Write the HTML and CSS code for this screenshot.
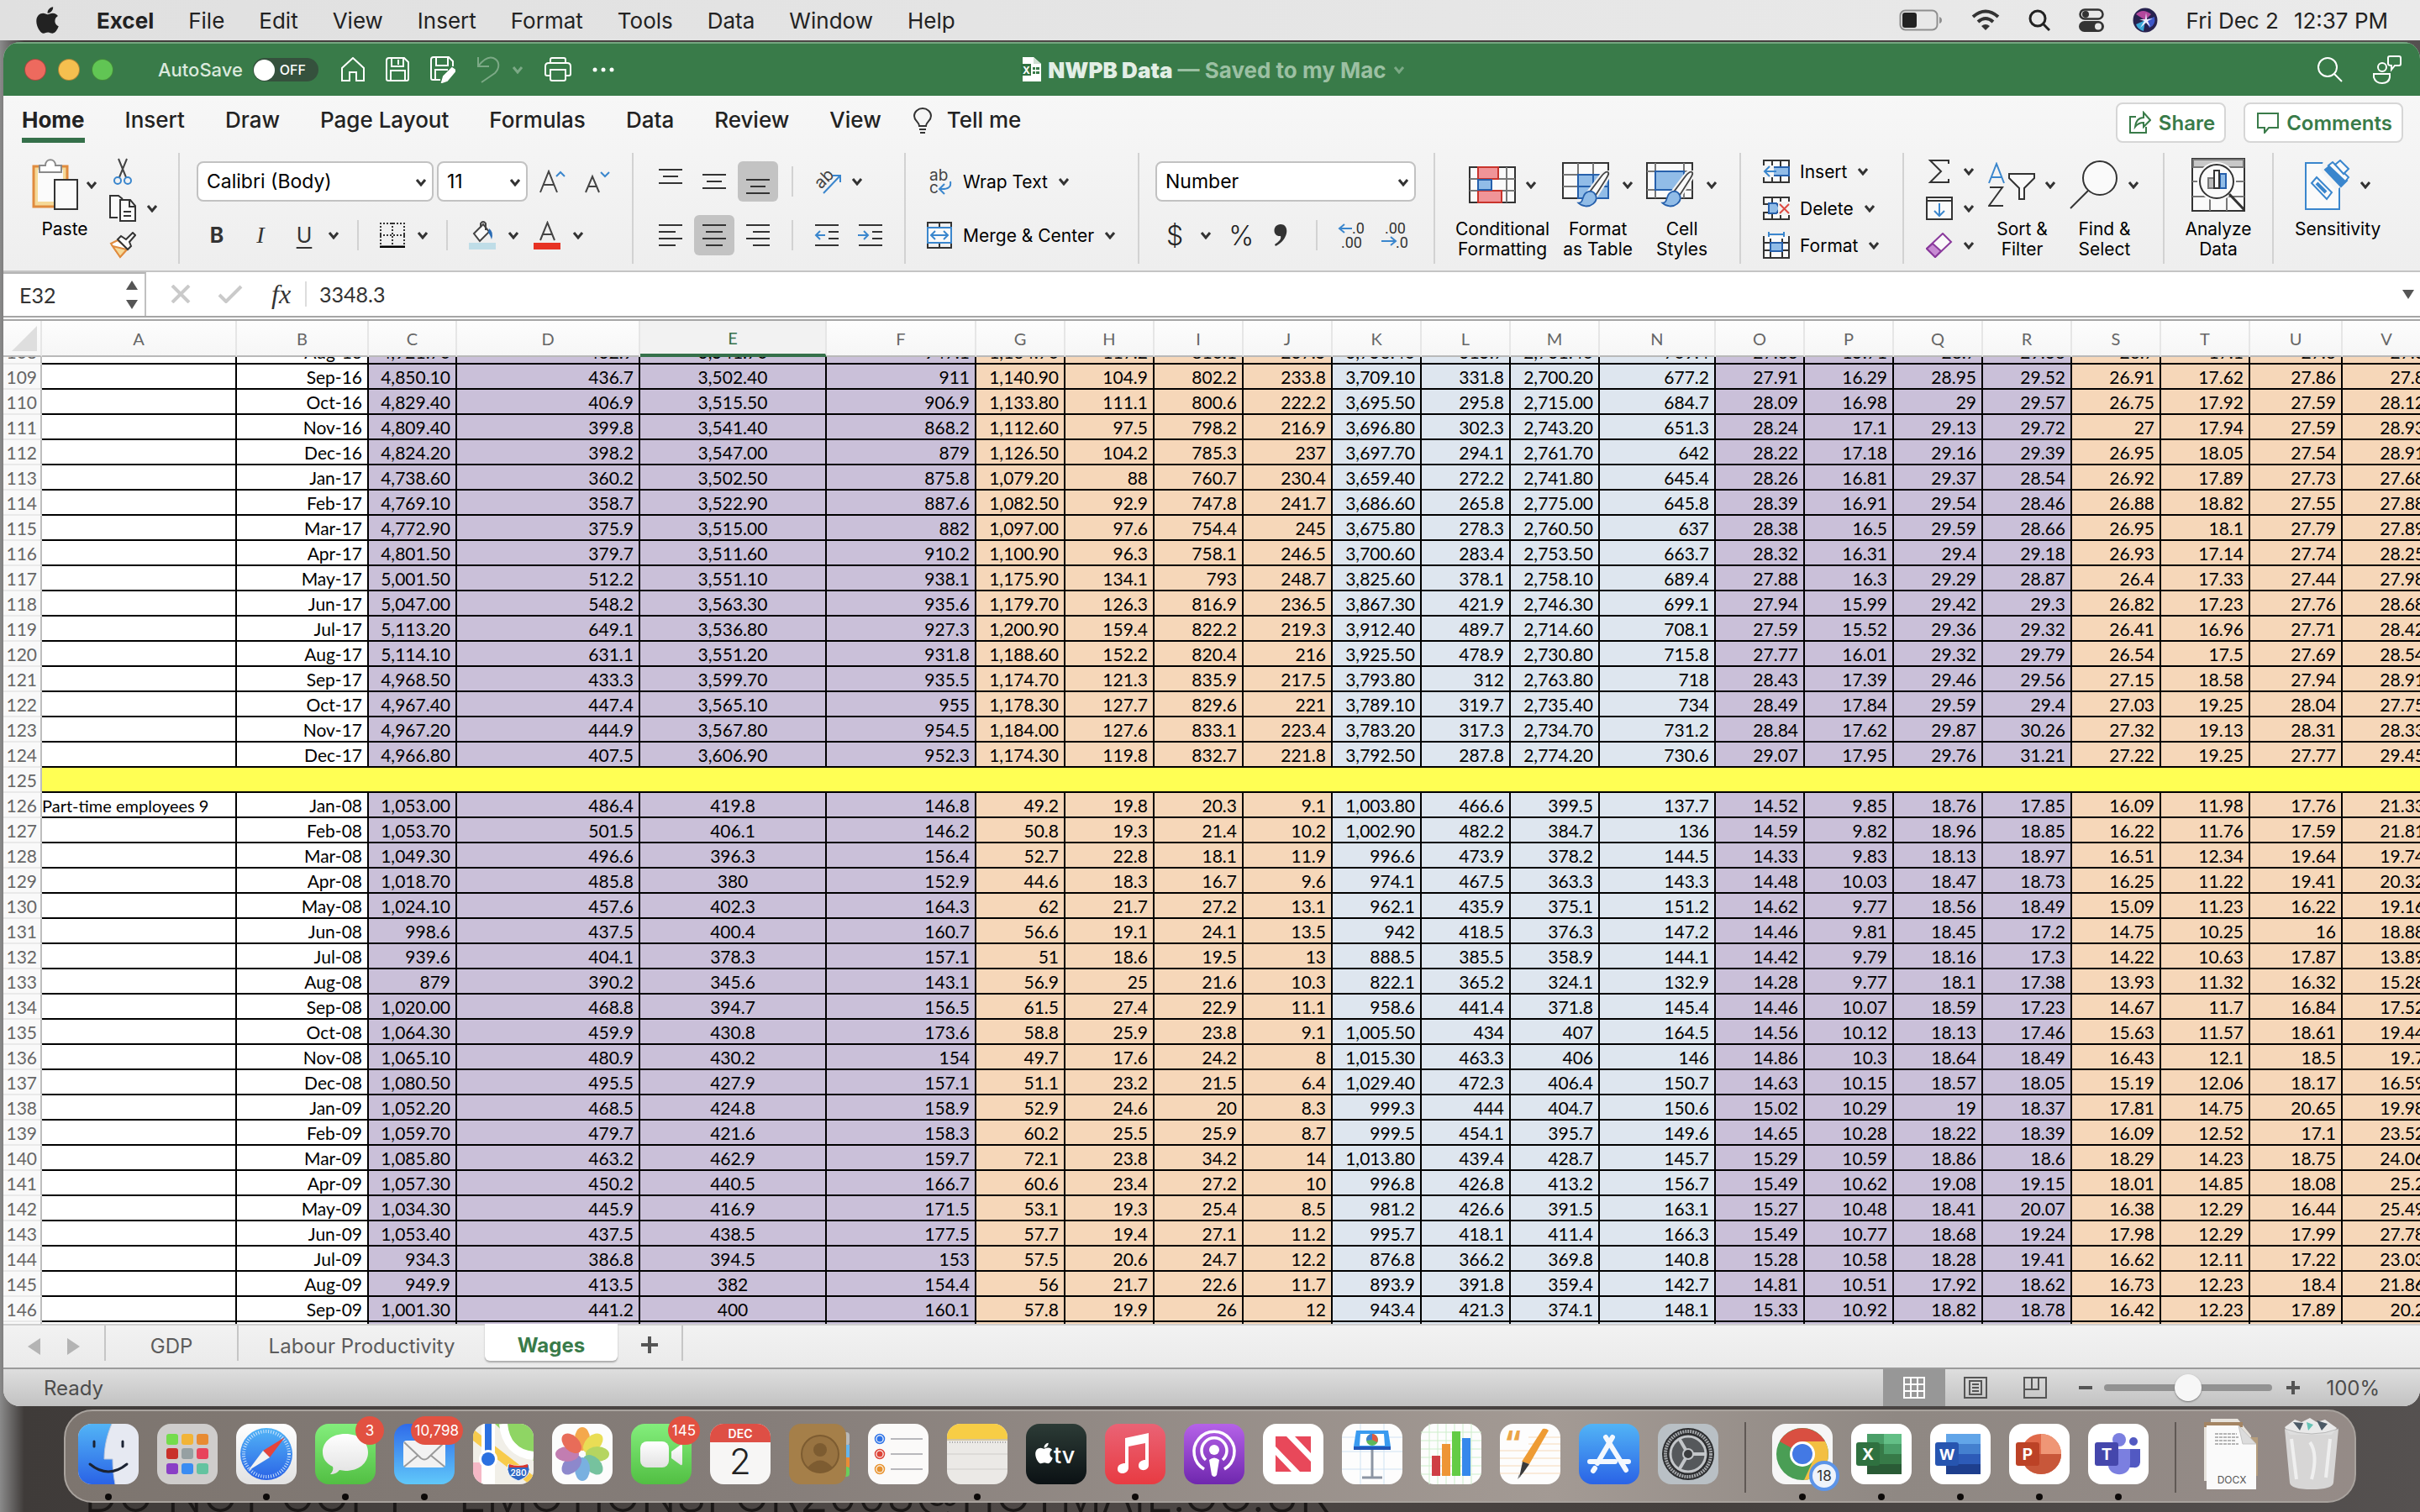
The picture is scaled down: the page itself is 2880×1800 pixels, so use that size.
FILE: index.html
```html
<!DOCTYPE html>
<html lang="en">
<head>
    <meta charset="UTF-8">
    <title>NWPB Data</title>
    <link rel="stylesheet" href="styles.css">
</head>
<body>
    <!-- shared symbols -->
    <svg class="defs" aria-hidden="true">
        <symbol id="chev" viewBox="0 0 14 10"><path d="M2 2l5 6 5-6" fill="none" stroke="currentColor" stroke-width="3"/></symbol>
        <symbol id="apple" viewBox="0 0 384 512"><path fill="currentColor" d="M318.7 268.7c-.2-36.7 16.4-64.4 50-84.8-18.8-26.9-47.2-41.7-84.7-44.6-35.5-2.8-74.3 20.7-88.5 20.7-15 0-49.4-19.7-76.4-19.7C63.3 141.2 4 184.8 4 273.5q0 39.3 14.4 81.2c12.8 36.7 59 126.7 107.2 125.2 25.2-.6 43-17.9 75.8-17.9 31.8 0 48.3 17.9 76.4 17.9 48.6-.7 90.4-82.5 102.6-119.3-65.2-30.7-61.7-90-61.7-91.9zm-56.6-164.2c27.3-32.4 24.8-61.9 24-72.5-24.1 1.4-52 16.4-67.9 34.9-17.5 19.8-27.8 44.3-25.6 71.9 26.1 2 49.9-11.4 69.5-34.3z"/></symbol>
        <symbol id="brush" viewBox="0 0 44 50">
            <path d="M42 2c-3-1-6 2-9 6L18 28l7 6L39 12c3-5 5-8 3-10z" fill="#fafafa" stroke="#f2f2f2" stroke-width="7"/>
            <path d="M42 2c-3-1-6 2-9 6L18 28l7 6L39 12c3-5 5-8 3-10z" fill="#fafafa" stroke="#444" stroke-width="2"/>
            <path d="M2 44c5 0 5-4 7-9 2-6 9-9 14-5 5 5 4 11-1 15-6 5-15 4-20-1z" fill="#91bce7" stroke="#2660ac" stroke-width="2"/>
        </symbol>
        <linearGradient id="blueV" x1="0" y1="0" x2="0" y2="1"><stop offset="0" stop-color="#52b4f6"/><stop offset="1" stop-color="#2a63e6"/></linearGradient>
        <linearGradient id="mailV" x1="0" y1="0" x2="0" y2="1"><stop offset="0" stop-color="#2f6bea"/><stop offset="1" stop-color="#60c8fa"/></linearGradient>
        <linearGradient id="greenV" x1="0" y1="0" x2="0" y2="1"><stop offset="0" stop-color="#83ee7c"/><stop offset="1" stop-color="#52bf43"/></linearGradient>
        <linearGradient id="redV" x1="0" y1="0" x2="0" y2="1"><stop offset="0" stop-color="#ea6375"/><stop offset="1" stop-color="#e83b42"/></linearGradient>
        <linearGradient id="purpleV" x1="0" y1="0" x2="0" y2="1"><stop offset="0" stop-color="#b562e8"/><stop offset="1" stop-color="#6f27ae"/></linearGradient>
        <linearGradient id="whiteV" x1="0" y1="0" x2="0" y2="1"><stop offset="0" stop-color="#fff"/><stop offset="1" stop-color="#e2e2e2"/></linearGradient>
        <linearGradient id="blackV" x1="0" y1="0" x2="0" y2="1"><stop offset="0" stop-color="#2c3b36"/><stop offset="1" stop-color="#0b1114"/></linearGradient>
        <clipPath id="tile"><rect width="72" height="72" rx="16"/></clipPath>
    </svg>

    <header class="menubar">
        <svg class="apple-logo"><use href="#apple"/></svg>
        <nav class="menus">
            <a href="#" class="app-name">Excel</a>
            <a href="#">File</a>
            <a href="#">Edit</a>
            <a href="#">View</a>
            <a href="#">Insert</a>
            <a href="#">Format</a>
            <a href="#">Tools</a>
            <a href="#">Data</a>
            <a href="#">Window</a>
            <a href="#">Help</a>
        </nav>
        <div class="menu-extras">
            <svg width="52" height="26" viewBox="0 0 52 26"><rect x="1.500" y="1.500" width="44" height="23" rx="6" fill="none" stroke="#8f8f8f" stroke-width="2"/><rect x="4" y="4" width="17" height="18" rx="3" fill="#222"/><path d="M48 9q3 1 3 4t-3 4z" fill="#8f8f8f"/></svg>
            <svg width="34" height="26" viewBox="0 0 34 26" fill="none" stroke="#333" stroke-width="4"><path d="M2 9Q17-4 32 9M8 15q9-8 18 0"/><path d="M17 25l-5-5q5-4 10 0z" fill="#333" stroke="none"/></svg>
            <svg width="26" height="26" viewBox="0 0 26 26" fill="none" stroke="#222" stroke-width="3"><circle cx="11" cy="11" r="9"/><path d="M17 17l8 8"/></svg>
            <svg width="30" height="28" viewBox="0 0 30 28"><rect x="1.500" y="1.500" width="27" height="11" rx="5.500" fill="none" stroke="#333" stroke-width="2.500"/><circle cx="8" cy="7" r="4" fill="#333"/><rect y="15" width="30" height="13" rx="6.500" fill="#333"/><circle cx="23" cy="21.500" r="4" fill="#e8e8e8"/></svg>
            <svg width="30" height="30" viewBox="0 0 30 30"><circle cx="15" cy="15" r="14.500" fill="#27224f"/><path d="M4 8q8-8 18 0l-7 7z" fill="#b3479d"/><path d="M15 15l11-4q2 10-6 13z" fill="#3d56c8"/><path d="M15 15L4 20q2 6 9 8z" fill="#3aa8d8"/><path d="M16 6l1 8 7-1-6 3 3 7-5-5-7 6 5-8-6-2 7 0z" fill="#eef"/></svg>
            <span class="clock"><span>Fri Dec 2</span><span>12:37 PM</span></span>
        </div>
    </header>

    <main class="desktop">
        <p class="watermark" aria-hidden="true">DO NOT COPY - EMOTIONSFOR2003@HOTMAIL.CO.UK</p>
        <section class="window">
            <div class="titlebar">
                <div class="title-left">
                    <div class="lights">
                        <button class="light red" aria-label="Close"></button>
                        <button class="light yellow" aria-label="Minimize"></button>
                        <button class="light green" aria-label="Zoom"></button>
                    </div>
                    <label class="autosave">AutoSave
                        <span class="switch"><input type="checkbox"><span>OFF</span></span>
                    </label>
                    <div class="quick">
                        <button aria-label="Home"><svg width="28" height="30" viewBox="0 0 28 30" fill="none" stroke="#fff" stroke-width="2"><path d="M1 13L14 1l13 12v15h-9V18h-8v10H1z"/></svg></button>
                        <button aria-label="Save"><svg width="28" height="30" viewBox="0 0 28 30" fill="none" stroke="#fff" stroke-width="2"><path d="M4 1h18l5 5v20q0 2-2 2H3q-2 0-2-2V4q0-3 3-3zM7 1v10h14V1M6 28V16h17v12M15 3v6"/></svg></button>
                        <button aria-label="Save as"><svg width="30" height="32" viewBox="0 0 30 32" fill="none" stroke="#fff" stroke-width="2"><path d="M12 28H3q-2 0-2-2V4q0-3 3-3h18l5 5v6M7 1v10h14V1M6 28V16h15"/><path d="M26 14l4 3-10 12-6 2 2-7z" fill="#fff"/></svg></button>
                        <button class="undo" aria-label="Undo"><svg width="28" height="32" viewBox="0 0 28 32" fill="none" stroke="currentColor" stroke-width="2"><path d="M2 1v11h13M2 12C8 4 14 0 20 2c8 3 8 12 2 18L6 31"/></svg><svg class="chev"><use href="#chev"/></svg></button>
                        <button aria-label="Print"><svg width="32" height="30" viewBox="0 0 32 30" fill="none" stroke="#fff" stroke-width="2"><path d="M7 7V3q0-2 2-2h14q2 0 2 2v4M7 22H3q-2 0-2-2v-9q0-4 4-4h22q4 0 4 4v9q0 2-2 2h-4M7 15h18v11q0 2-2 2H9q-2 0-2-2z"/></svg></button>
                        <button aria-label="More"><svg width="26" height="8" viewBox="0 0 26 8" fill="#fff"><circle cx="3" cy="4" r="2.500"/><circle cx="13" cy="4" r="2.500"/><circle cx="23" cy="4" r="2.500"/></svg></button>
                    </div>
                </div>
                <div class="doc-title">
                    <svg width="24" height="30" viewBox="0 0 24 30"><path d="M2 0h13l9 8v21H2z" fill="#fff"/><path d="M15 0v8h9" fill="#cfe0d2"/><rect y="8" width="12" height="14" fill="#2f7241"/><text x="2" y="20" font-size="12" fill="#fff" font-family="Inter, sans-serif">X</text><path d="M14 12h3v3h-3zM18 12h4v3h-4zM14 17h3v3h-3zM18 17h4v3h-4z" fill="#397b49"/></svg>
                    <span><b>NWPB Data</b> — Saved to my Mac</span>
                    <svg class="chev"><use href="#chev"/></svg>
                </div>
                <div class="title-right">
                    <button aria-label="Search"><svg width="30" height="30" viewBox="0 0 30 30" fill="none" stroke="#fff" stroke-width="2"><circle cx="12" cy="12" r="11"/><path d="M20 20l9 9"/></svg></button>
                    <button aria-label="Presence"><svg width="34" height="34" viewBox="0 0 34 34" fill="none" stroke="#fff" stroke-width="2"><circle cx="11" cy="14" r="5"/><path d="M1 22h19v4q-1 7-9 7t-10-7zM20 1h11q2 0 2 2v7q0 2-2 2h-5l-4 5v-5q-4 0-4-2V3q0-2 2-2z"/></svg></button>
                </div>
            </div>

            <div class="ribbon">
                <div class="tabs">
                    <nav class="tab-list">
                        <a href="#" class="active">Home</a>
                        <a href="#">Insert</a>
                        <a href="#">Draw</a>
                        <a href="#">Page Layout</a>
                        <a href="#">Formulas</a>
                        <a href="#">Data</a>
                        <a href="#">Review</a>
                        <a href="#">View</a>
                        <a href="#" class="tellme"><svg width="22" height="32" viewBox="0 0 22 32" fill="none" stroke="#333" stroke-width="2"><path d="M7 22c0-5-6-6-6-12a10 9 0 0 1 20 0c0 6-6 7-6 12zM7 26h8M8 30h6"/></svg>Tell me</a>
                    </nav>
                    <button class="pill"><svg width="26" height="28" viewBox="0 0 26 28" fill="none" stroke="#397b49" stroke-width="2"><path d="M8 7H1v19h19v-7"/><path d="M7 19C8 11 12 8 17 8V2l8 9-8 8v-5c-4 0-7 1-10 5z"/></svg>Share</button>
                    <button class="pill"><svg width="26" height="26" viewBox="0 0 26 26" fill="none" stroke="#397b49" stroke-width="2"><path d="M1 2h24v17H14l-5 6v-6H1z"/></svg>Comments</button>
                </div>

                <div class="groups">
                    <div class="group clipboard">
                        <button class="big">
                            <span class="big-icon"><svg width="56" height="62" viewBox="0 0 56 62"><path d="M2 9h40v48H2z" fill="#f5d998" stroke="#e08b3e" stroke-width="3"/><path d="M7 13h30v38H7z" fill="#fbfbfb"/><path d="M9 16V8h7c0-9 12-9 12 0h7v8z" fill="#fff" stroke="#8a8a8a" stroke-width="2"/><path d="M27 25h27v35H27z" fill="#fafafa" stroke="#333" stroke-width="2"/></svg><svg class="chev"><use href="#chev"/></svg></span>
                            <span>Paste</span>
                        </button>
                        <div class="stack">
                            <button class="tool" aria-label="Cut"><svg width="32" height="32" viewBox="0 0 32 32" fill="none" stroke="#444" stroke-width="2"><path d="M11 1l9 22M21 1l-9 22"/><g stroke="#3a86cd"><circle cx="10" cy="27" r="4"/><circle cx="22" cy="27" r="4"/></g></svg></button>
                            <button class="tool" aria-label="Copy"><svg width="32" height="32" viewBox="0 0 32 32" fill="#fafafa" stroke="#333" stroke-width="2"><path d="M10 27H1V1h10l5 4"/><path d="M13 6h12l6 7v18H13z"/><path d="M24 6v8h7M17 20h9M17 25h9" fill="none"/></svg><svg class="chev"><use href="#chev"/></svg></button>
                            <button class="tool" aria-label="Format painter"><svg width="32" height="32" viewBox="0 0 32 32"><path d="M2 14l8-4 12 10-9 10z" fill="#fff" stroke="#e08b3e" stroke-width="2"/><path d="M4 17l17 4-8 9z" fill="#f5d998" stroke="#e08b3e" stroke-width="2"/><path d="M10 9l4-4 6 4 8-8 3 3-7 8 2 5-4 4z" fill="#fafafa" stroke="#333" stroke-width="2"/></svg></button>
                        </div>
                    </div>

                    <div class="group font-group">
                        <div class="row">
                            <span class="select wide"><select aria-label="Font"><option>Calibri (Body)</option></select><svg class="chev"><use href="#chev"/></svg></span>
                            <span class="select narrow"><select aria-label="Font size"><option>11</option></select><svg class="chev"><use href="#chev"/></svg></span>
                            <button class="grow" aria-label="Increase font size"><svg width="32" height="28" viewBox="0 0 32 28" fill="none" stroke="#444" stroke-width="2"><path d="M1 27L11 2l10 25M5 18h12"/><path d="M20 8l5-5 5 5" stroke="#3a86cd"/></svg></button>
                            <button class="grow" aria-label="Decrease font size"><svg width="32" height="28" viewBox="0 0 32 28" fill="none" stroke="#444" stroke-width="2"><path d="M1 27L9 8l8 19M4 20h10"/><path d="M19 3l5 5 5-5" stroke="#3a86cd"/></svg></button>
                        </div>
                        <div class="row">
                            <button class="sq bold">B</button>
                            <button class="sq italic">I</button>
                            <button class="sq under">U</button>
                            <svg class="chev"><use href="#chev"/></svg>
                            <i class="sep"></i>
                            <button class="tool" aria-label="Borders"><svg width="30" height="30" viewBox="0 0 30 30" fill="none" stroke="#333" stroke-width="2"><path d="M0 1h30M1 0v27M29 0v27M15 0v27M0 15h30" stroke-dasharray="2 2"/><path d="M0 29h30" stroke="#000" stroke-width="3"/></svg><svg class="chev"><use href="#chev"/></svg></button>
                            <i class="sep"></i>
                            <button class="tool" aria-label="Fill color"><svg width="32" height="34" viewBox="0 0 32 34"><path d="M6 15L17 4l7 9-11 11z" fill="#fafafa" stroke="#444" stroke-width="2"/><path d="M14 8V3q3-4 6 0v8" fill="none" stroke="#444" stroke-width="2"/><path d="M24 9q6 4 3 13-2-6-4-8z" fill="#2a6cb5"/><path d="M0 26h32v8H0z" fill="#bfdde7"/></svg><svg class="chev"><use href="#chev"/></svg></button>
                            <button class="tool" aria-label="Font color"><svg width="32" height="34" viewBox="0 0 32 34"><path d="M8 23L16.500 2 25 23M11 16h11" fill="none" stroke="#444" stroke-width="2"/><path d="M0 26h32v8H0z" fill="#e73223"/></svg><svg class="chev"><use href="#chev"/></svg></button>
                        </div>
                    </div>

                    <div class="group align-group">
                        <div class="row">
                            <button class="sq" aria-label="Top align"><svg width="28" height="30" viewBox="0 0 28 30" stroke="#333" stroke-width="2"><path d="M0 1h28M5 9h18M0 17h28"/></svg></button>
                            <button class="sq" aria-label="Middle align"><svg width="28" height="30" viewBox="0 0 28 30" stroke="#333" stroke-width="2"><path d="M0 7h28M5 15h18M0 23h28"/></svg></button>
                            <button class="sq on" aria-label="Bottom align"><svg width="28" height="30" viewBox="0 0 28 30" stroke="#333" stroke-width="2"><path d="M0 13h28M5 21h18M0 29h28"/></svg></button>
                            <i class="sep"></i>
                            <button class="tool" aria-label="Orientation"><svg width="32" height="32" viewBox="0 0 32 32"><text x="4" y="24" font-size="20" fill="#444" font-family="Inter, sans-serif" transform="rotate(-45 8 20)">ab</text><path d="M11 30L31 9M22 9h9v8" fill="none" stroke="#3a86cd" stroke-width="2"/></svg><svg class="chev"><use href="#chev"/></svg></button>
                        </div>
                        <div class="row">
                            <button class="sq" aria-label="Align left"><svg width="28" height="26" viewBox="0 0 28 26" stroke="#333" stroke-width="2"><path d="M0 1h28M0 9h20M0 17h28M0 25h20"/></svg></button>
                            <button class="sq on" aria-label="Center"><svg width="28" height="26" viewBox="0 0 28 26" stroke="#333" stroke-width="2"><path d="M0 1h28M4 9h20M0 17h28M4 25h20"/></svg></button>
                            <button class="sq" aria-label="Align right"><svg width="28" height="26" viewBox="0 0 28 26" stroke="#333" stroke-width="2"><path d="M0 1h28M8 9h20M0 17h28M8 25h20"/></svg></button>
                            <i class="sep"></i>
                            <button class="tool" aria-label="Decrease indent"><svg width="30" height="26" viewBox="0 0 30 26" fill="none" stroke="#333" stroke-width="2"><path d="M1 1h28M17 9h12M17 17h12M1 25h28"/><path d="M13 13H2M7 8l-5 5 5 5" stroke="#3a86cd"/></svg></button>
                            <button class="tool indent" aria-label="Increase indent"><svg width="30" height="26" viewBox="0 0 30 26" fill="none" stroke="#333" stroke-width="2"><path d="M1 1h28M17 9h12M17 17h12M1 25h28"/><path d="M0 13h12M7 8l5 5-5 5" stroke="#3a86cd"/></svg></button>
                        </div>
                    </div>

                    <div class="group wrap-group">
                        <div class="row">
                            <button class="tool"><svg width="32" height="32" viewBox="0 0 32 32"><text x="4" y="15" font-size="19" fill="#444" font-family="Inter, sans-serif">ab</text><text x="4" y="30" font-size="19" fill="#444" font-family="Inter, sans-serif">c</text><path d="M29 16q2 10-12 9M22 19l-6 6 6 6" fill="none" stroke="#3a86cd" stroke-width="2"/></svg>Wrap Text<svg class="chev"><use href="#chev"/></svg></button>
                        </div>
                        <div class="row">
                            <button class="tool"><svg width="32" height="32" viewBox="0 0 32 32" fill="none" stroke="#333" stroke-width="2"><path d="M2 1h28v30H2zM16 1v6M16 25v6"/><path d="M2 7h28v18H2z" fill="#fafafa" stroke="#3a86cd"/><path d="M6 16h20M11 11l-5 5 5 5M21 11l5 5-5 5" stroke="#3a86cd"/></svg>Merge &amp; Center<svg class="chev"><use href="#chev"/></svg></button>
                        </div>
                    </div>

                    <div class="group number-group">
                        <div class="row">
                            <span class="select format"><select aria-label="Number format"><option>Number</option></select><svg class="chev"><use href="#chev"/></svg></span>
                        </div>
                        <div class="row numbers">
                            <button class="glyph">$</button>
                            <svg class="chev"><use href="#chev"/></svg>
                            <button class="glyph">%</button>
                            <button class="glyph" aria-label="Comma style"><svg width="24" height="26" viewBox="-4 0 24 26"><path d="M8 0c11 0 10 18-6 26l-1-2c6-4 8-7 7-10C-2 15-2 0 8 0z" fill="#333"/></svg></button>
                            <i class="sep"></i>
                            <button class="tool" aria-label="Increase decimal"><svg width="32" height="32" viewBox="0 0 32 32"><g font-size="18" fill="#333" font-family="Roboto, sans-serif"><text x="17" y="14">.0</text><text x="4" y="31">.00</text></g><path d="M17 8H2M8 3L2 8l6 5" fill="none" stroke="#3a86cd" stroke-width="2"/></svg></button>
                            <button class="tool" aria-label="Decrease decimal"><svg width="32" height="32" viewBox="0 0 32 32"><g font-size="18" fill="#333" font-family="Roboto, sans-serif"><text x="4" y="14">.00</text><text x="17" y="31">.0</text></g><path d="M0 23h16M11 18l6 5-6 5" fill="none" stroke="#3a86cd" stroke-width="2"/></svg></button>
                        </div>
                    </div>

                    <div class="group style-group">
                        <button class="big">
                            <span class="big-icon"><svg width="56" height="44" viewBox="0 0 56 44" fill="#fafafa" stroke="#333" stroke-width="2"><path d="M1 1h54v42H1z"/><path d="M1 15h54M1 29h54M11 1v42M45 1v42" stroke="#777"/><path d="M11 1h24v14H11zM11 29h28v14H11z" fill="#f09498" stroke="#c9342c"/><path d="M11 16h16v12H11z" fill="#91bce7" stroke="#2660ac"/></svg><svg class="chev"><use href="#chev"/></svg></span>
                            <span>Conditional<br>Formatting</span>
                        </button>
                        <button class="big">
                            <span class="big-icon"><svg width="60" height="54" viewBox="0 0 60 54" fill="#fafafa" stroke="#333" stroke-width="2"><path d="M1 1h54v42H1z"/><path d="M1 15h54M1 29h54M19 1v42M37 1v42" stroke="#777"/><path d="M19 15h36v28H19zM19 29h36M37 15v28" fill="#91bce7" stroke="#2660ac"/><use href="#brush" x="15" y="10" width="44" height="44"/></svg><svg class="chev"><use href="#chev"/></svg></span>
                            <span>Format<br>as Table</span>
                        </button>
                        <button class="big">
                            <span class="big-icon"><svg width="60" height="54" viewBox="0 0 60 54" fill="#fafafa" stroke="#333" stroke-width="2"><path d="M1 1h54v42H1z"/><path d="M1 11h54M1 33h54M11 1v42M45 1v42" stroke="#777"/><path d="M11 11h34v22H11z" fill="#91bce7" stroke="#2660ac"/><use href="#brush" x="15" y="10" width="44" height="44"/></svg><svg class="chev"><use href="#chev"/></svg></span>
                            <span>Cell<br>Styles</span>
                        </button>
                    </div>

                    <div class="group cells-group">
                        <div class="stack">
                            <button class="tool"><svg width="32" height="28" viewBox="0 0 32 28" fill="#fafafa" stroke="#333" stroke-width="2"><path d="M1 1h30v26H1zM11 1v26M21 1v26"/><path d="M11 9h20v10H11z" fill="#91bce7" stroke="#2660ac"/><path d="M0 7h13v14H0z" fill="#f2f2f2" stroke="none"/><path d="M16 14H2M8 8l-6 6 6 6" fill="none" stroke="#3a86cd"/></svg>Insert<svg class="chev"><use href="#chev"/></svg></button>
                            <button class="tool"><svg width="32" height="28" viewBox="0 0 32 28" fill="#fafafa" stroke="#333" stroke-width="2"><path d="M1 9V1h30v8zM1 27v-8h30v8zM11 1v8M21 1v8M11 19v8M21 19v8"/><path d="M7 8h9l4 6-4 6H7z" fill="#91bce7" stroke="#2660ac"/><path d="M18 6h14v16H18z" fill="#f2f2f2" stroke="none"/><path d="M20 9l11 11M31 9L20 20" fill="none" stroke="#dd4a42"/></svg>Delete<svg class="chev"><use href="#chev"/></svg></button>
                            <button class="tool"><svg width="32" height="32" viewBox="0 0 32 32" fill="#fafafa" stroke="#333" stroke-width="2"><path d="M1 5v26h30V5M1 13h30M1 22h30M9 8v23M23 8v23"/><path d="M9 13h14v10H9z" fill="#91bce7" stroke="#2660ac"/><path d="M7 3h18M7 0v6M25 0v6" stroke="#3a86cd"/></svg>Format<svg class="chev"><use href="#chev"/></svg></button>
                        </div>
                    </div>

                    <div class="group edit-group">
                        <div class="stack">
                            <button class="tool" aria-label="AutoSum"><svg width="32" height="28" viewBox="0 0 32 28" fill="none" stroke="#333" stroke-width="2"><path d="M27 5V1H5l13 13L5 27h22v-4"/></svg><svg class="chev"><use href="#chev"/></svg></button>
                            <button class="tool" aria-label="Fill"><svg width="32" height="28" viewBox="0 0 32 28" fill="#fafafa" stroke="#333" stroke-width="2"><path d="M1 1h30v26H1zM1 5h30"/><path d="M16 8v14M10 17l6 6 6-6" fill="none" stroke="#3a86cd"/></svg><svg class="chev"><use href="#chev"/></svg></button>
                            <button class="tool" aria-label="Clear"><svg width="32" height="30" viewBox="0 0 32 30" fill="#fafafa" stroke="#8a3a9c" stroke-width="2"><path d="M20 1l10 10-19 18L1 19z"/><path d="M8 13l10 9-7 7L1 19z" fill="#c78bd3"/></svg><svg class="chev"><use href="#chev"/></svg></button>
                        </div>
                        <button class="big">
                            <span class="big-icon"><svg width="56" height="54" viewBox="0 0 56 54" fill="none" stroke="#333" stroke-width="2"><path d="M1 25L10 2l9 23M4 18h12" stroke="#3a86cd"/><path d="M2 30h15L1 52h17"/><path d="M25 14h30v5L43 31v13h-6V31L25 19z" fill="#fafafa"/></svg><svg class="chev"><use href="#chev"/></svg></span>
                            <span>Sort &amp;<br>Filter</span>
                        </button>
                        <button class="big">
                            <span class="big-icon"><svg width="58" height="58" viewBox="0 0 58 58" fill="#fafafa" stroke="#333" stroke-width="2"><circle cx="36" cy="21" r="20"/><path d="M22 36L1 57"/></svg><svg class="chev"><use href="#chev"/></svg></span>
                            <span>Find &amp;<br>Select</span>
                        </button>
                    </div>

                    <div class="group analyze-group">
                        <button class="big">
                            <span class="big-icon"><svg width="64" height="64" viewBox="0 0 64 64" fill="#fafafa" stroke="#333" stroke-width="2"><path d="M1 1h62v62H1z"/><path d="M2 2h60v9H2z" fill="#c8c8c8" stroke="#777"/><path d="M1 28h62M1 46h62M22 46v17M42 46v17" stroke="#777"/><circle cx="30" cy="28" r="20" stroke="#fafafa" stroke-width="6"/><circle cx="30" cy="28" r="20"/><path d="M45 43l18 19" stroke-width="3"/><path d="M20 24h7v12h-7z" fill="#bbb" stroke="#777"/><path d="M34 19h7v17h-7z" fill="#91bce7" stroke="#2660ac"/><path d="M27 15h6v21h-6z"/></svg></span>
                            <span>Analyze<br>Data</span>
                        </button>
                    </div>

                    <div class="group sens-group">
                        <button class="big">
                            <span class="big-icon"><svg width="54" height="60" viewBox="0 0 54 60" fill="#fafafa" stroke="#3a86cd" stroke-width="2"><path d="M1 4h40v55H1z"/><path d="M22 1l-3 12 18 24 7-6V1z" fill="#f4f4f4" stroke="none"/><path d="M14 21l18 18-6 8L8 28z"/><path d="M14 28l11 11" stroke-width="4"/><path d="M24 12l6-5 20 18-7 7z" fill="#3a86cd"/><path d="M28 7l5-4 19 18-4 5z"/><path d="M36 6l6-5 10 10-6 6z"/></svg><svg class="chev"><use href="#chev"/></svg></span>
                            <span>Sensitivity</span>
                        </button>
                    </div>
                </div>
            </div>

            <div class="formula-bar">
                <div class="name-box">
                    <input type="text" aria-label="Name box" value="E32">
                    <svg width="14" height="34" viewBox="0 0 14 34" fill="#555"><path d="M7 0l7 11H0zM7 34l7-11H0z"/></svg>
                </div>
                <button aria-label="Cancel"><svg width="24" height="22" viewBox="0 0 24 22" stroke="#cacaca" stroke-width="4"><path d="M2 1l20 20M22 1L2 21"/></svg></button>
                <button class="enter" aria-label="Enter"><svg width="30" height="22" viewBox="0 0 30 22" fill="none" stroke="#cacaca" stroke-width="4"><path d="M2 12l8 8L28 2"/></svg></button>
                <button class="fx">fx</button>
                <input class="formula" type="text" aria-label="Formula" value="3348.3">
                <svg class="expand" width="14" height="11" viewBox="0 0 14 11"><path d="M0 0h14L7 11z" fill="#555"/></svg>
            </div>

            <div class="sheet" id="sheet">
                <table>
                    <colgroup id="cols"></colgroup>
                    <thead><tr id="letters"></tr></thead>
                    <tbody id="rows"></tbody>
                </table>
            </div>

            <div class="sheet-tabs">
                <div class="scrollers">
                    <button aria-label="Previous sheet"><svg width="15" height="20" viewBox="0 0 15 20"><path d="M15 0v20L0 10z" fill="#b4b4b4"/></svg></button>
                    <button aria-label="Next sheet"><svg width="15" height="20" viewBox="0 0 15 20"><path d="M0 0v20l15-10z" fill="#b4b4b4"/></svg></button>
                </div>
                <a href="#" class="short">GDP</a>
                <a href="#" class="long">Labour Productivity</a>
                <a href="#" class="short current">Wages</a>
                <button class="add" aria-label="Add sheet"><svg width="20" height="20" viewBox="0 0 20 20"><path d="M10 0v20M0 10h20" stroke="#555" stroke-width="4"/></svg></button>
            </div>

            <div class="statusbar">
                <span class="ready">Ready</span>
                <button class="view on" aria-label="Normal view"><svg width="26" height="26" viewBox="0 0 26 26" fill="none" stroke="#fff" stroke-width="2"><path d="M1 1h24v24H1zM1 9h24M1 17h24M9 1v24M17 1v24"/></svg></button>
                <button class="view" aria-label="Page layout"><svg width="28" height="26" viewBox="0 0 28 26" fill="none" stroke="#555" stroke-width="2"><path d="M1 1h26v24H1zM7 5h14v16H7zM10 9h8M10 13h8M10 17h8"/></svg></button>
                <button class="view" aria-label="Page break preview"><svg width="28" height="26" viewBox="0 0 28 26" fill="none" stroke="#555" stroke-width="2"><path d="M1 1h26v24H1zM1 15h17V1M10 1v14"/></svg></button>
                <button class="zoom-btn" aria-label="Zoom out"><svg width="16" height="16" viewBox="0 0 16 16"><path d="M0 8h16" stroke="#555" stroke-width="4"/></svg></button>
                <input type="range" min="0" max="100" value="50" aria-label="Zoom">
                <button class="zoom-btn" aria-label="Zoom in"><svg width="16" height="16" viewBox="0 0 16 16"><path d="M0 8h16M8 0v16" stroke="#555" stroke-width="4"/></svg></button>
                <span class="percent">100%</span>
            </div>
        </section>

        <nav class="dock">
            <button class="app running" aria-label="Finder"><svg viewBox="0 0 72 72"><g clip-path="url(#tile)"><path d="M0 0h72v72H0z" fill="#e6e9f2"/><path d="M0 0h40c-6 14-9 28-9 42h10c0 10 1 20 3 30H0z" fill="url(#blueV)"/></g><path d="M40 0c-6 14-9 28-9 42h10c0 10 1 20 3 30" fill="none" stroke="#b9c6dc" stroke-width="1"/><path d="M19 21v6M53 21v6M14 48q22 18 44 0" fill="none" stroke="#1b2333" stroke-width="3" stroke-linecap="round"/></svg></button>
            <button class="app" aria-label="Launchpad"><svg viewBox="0 0 72 72"><rect width="72" height="72" rx="16" fill="#cfcdcc"/><g><rect x="11" y="12" width="14" height="13" rx="3" fill="#74dc4c"/><rect x="29" y="12" width="14" height="13" rx="3" fill="#f2b437"/><rect x="47" y="12" width="14" height="13" rx="3" fill="#e88b33"/><rect x="11" y="29" width="14" height="13" rx="3" fill="#c9302a"/><rect x="29" y="29" width="14" height="13" rx="3" fill="#96a0a2"/><rect x="47" y="29" width="14" height="13" rx="3" fill="#e8445c"/><rect x="11" y="47" width="14" height="13" rx="3" fill="#8a3fc6"/><rect x="29" y="47" width="14" height="13" rx="3" fill="#3a8cf2"/><rect x="47" y="47" width="14" height="13" rx="3" fill="#64c3a0"/></g></svg></button>
            <button class="app running" aria-label="Safari"><svg viewBox="0 0 72 72"><rect width="72" height="72" rx="16" fill="url(#whiteV)"/><circle cx="36" cy="36" r="31" fill="url(#blueV)"/><circle cx="36" cy="36" r="27" fill="none" stroke="#cfe5fb" stroke-width="4" stroke-dasharray="1 2"/><path d="M58 16L32 32l8 8z" fill="#e5443b"/><path d="M14 56l18-24 8 8z" fill="#f2f2f2"/></svg></button>
            <button class="app running" aria-label="Messages"><svg viewBox="0 0 72 72"><rect width="72" height="72" rx="16" fill="url(#greenV)"/><path d="M36 12c16 0 27 9 27 22S52 56 36 56l-7-1c-2 3-6 5-11 5 3-3 4-6 3-9C13 47 9 41 9 34c0-13 11-22 27-22z" fill="url(#whiteV)"/></svg><span class="badge">3</span></button>
            <button class="app running" aria-label="Mail"><svg viewBox="0 0 72 72"><rect width="72" height="72" rx="16" fill="url(#mailV)"/><rect x="11" y="20" width="50" height="32" rx="4" fill="#f2f2f2"/><path d="M12 22l20 19q4 3 8 0l20-19M12 51l17-14M60 51L43 37" fill="none" stroke="#9a9a9a" stroke-width="2"/></svg><span class="badge">10,798</span></button>
            <button class="app" aria-label="Maps"><svg viewBox="0 0 72 72"><g clip-path="url(#tile)"><path d="M0 0h72v72H0z" fill="#f1efe8"/><path d="M26 0h46v44z" fill="#8fd564"/><path d="M36 0c2 22 14 36 36 38" fill="none" stroke="#fff" stroke-width="10"/><path d="M0 46h10v26H0z" fill="#f5b8c6"/><path d="M-4 10l80 62" stroke="#f8cb4c" stroke-width="11"/><path d="M18-2v76" stroke="#fff" stroke-width="16"/><path d="M18-2v44" stroke="#2b70e0" stroke-width="8"/><circle cx="18" cy="42" r="11" fill="#fff"/><circle cx="18" cy="42" r="8" fill="#2b70e0"/></g><path d="M42 48q12 4 24 0 5 14-12 20-17-6-12-20z" fill="#2f68c4" stroke="#fff" stroke-width="1"/><path d="M43 48q11 4 22 0v4H43z" fill="#d8372f"/><text x="54" y="62" font-size="10" fill="#fff" text-anchor="middle" font-family="Inter, sans-serif" font-weight="600">280</text></svg></button>
            <button class="app" aria-label="Photos"><svg viewBox="0 0 72 72"><rect width="72" height="72" rx="16" fill="#fcfcfc"/><g transform="translate(36 36)" opacity=".85"><ellipse cy="-18" rx="9" ry="14" fill="#f39a2e"/><ellipse cy="-18" rx="9" ry="14" fill="#e6d838" transform="rotate(45)"/><ellipse cy="-18" rx="9" ry="14" fill="#a9cf45" transform="rotate(90)"/><ellipse cy="-18" rx="9" ry="14" fill="#5fb98e" transform="rotate(135)"/><ellipse cy="-18" rx="9" ry="14" fill="#63a3dc" transform="rotate(180)"/><ellipse cy="-18" rx="9" ry="14" fill="#7a74c4" transform="rotate(225)"/><ellipse cy="-18" rx="9" ry="14" fill="#b867a4" transform="rotate(270)"/><ellipse cy="-18" rx="9" ry="14" fill="#e5533d" transform="rotate(315)"/></g></svg></button>
            <button class="app" aria-label="FaceTime"><svg viewBox="0 0 72 72"><rect width="72" height="72" rx="16" fill="url(#greenV)"/><rect x="11" y="21" width="34" height="31" rx="8" fill="url(#whiteV)"/><path d="M48 33l11-8q2-1 2 2v20q0 3-2 2l-11-8z" fill="url(#whiteV)"/></svg><span class="badge">145</span></button>
            <button class="app" aria-label="Calendar"><svg viewBox="0 0 72 72"><g clip-path="url(#tile)"><path d="M0 0h72v72H0z" fill="#f7f6f5"/><path d="M0 0h72v22H0z" fill="#de4f45"/></g><text x="36" y="17" font-size="14" font-weight="600" fill="#fff" text-anchor="middle" font-family="Inter, sans-serif">DEC</text><text x="36" y="60" font-size="42" font-weight="300" fill="#222" text-anchor="middle" font-family="Inter, sans-serif">2</text></svg></button>
            <button class="app" aria-label="Contacts"><svg viewBox="0 0 72 72"><rect x="52" y="10" width="20" height="16" rx="4" fill="#b9b9b9"/><rect x="52" y="25" width="20" height="16" fill="#63b5ee"/><rect x="52" y="40" width="20" height="12" fill="#ea8c35"/><rect x="52" y="51" width="20" height="12" rx="4" fill="#69cf5c"/><rect width="68" height="72" rx="14" fill="#a57f49"/><circle cx="37" cy="36" r="22" fill="#987341" stroke="#7d5c31" stroke-width="2"/><circle cx="37" cy="31" r="8" fill="#7d5c31"/><path d="M22 52q15-17 30 0-15 12-30 0z" fill="#7d5c31"/></svg></button>
            <button class="app" aria-label="Reminders"><svg viewBox="0 0 72 72"><rect width="72" height="72" rx="16" fill="#fbfaf9"/><g fill="none" stroke-width="1.500"><circle cx="14" cy="18" r="5.500" stroke="#2f74e8"/><circle cx="14" cy="36" r="5.500" stroke="#dd4438"/><circle cx="14" cy="54" r="5.500" stroke="#e8932f"/></g><circle cx="14" cy="18" r="3.500" fill="#2f74e8"/><circle cx="14" cy="36" r="3.500" fill="#dd4438"/><circle cx="14" cy="54" r="3.500" fill="#e8932f"/><path d="M27 18h38M27 36h38M27 54h38" stroke="#b8b8bc" stroke-width="2"/></svg></button>
            <button class="app running" aria-label="Notes"><svg viewBox="0 0 72 72"><g clip-path="url(#tile)"><path d="M0 0h72v72H0z" fill="#ebe9e6"/><path d="M0 0h72v18H0z" fill="#f7cd45"/><path d="M0 36h72M0 54h72" stroke="#cfcdca" stroke-width="1"/><path d="M0 19h72" stroke="#b9a15a" stroke-width="1"/><path d="M3 22h69" stroke="#aaa" stroke-width="2" stroke-dasharray="1 2"/></g></svg></button>
            <button class="app" aria-label="TV"><svg viewBox="0 0 72 72"><rect width="72" height="72" rx="16" fill="url(#blackV)"/><use href="#apple" x="10" y="21" width="23" height="28" color="#fff"/><text x="33" y="47" font-size="27" font-weight="500" fill="#fff" font-family="Inter, sans-serif">tv</text></svg></button>
            <button class="app running" aria-label="Music"><svg viewBox="0 0 72 72"><rect width="72" height="72" rx="16" fill="url(#redV)"/><path d="M24 17l28-6v38c0 8-12 8-12 1 0-5 4-7 8-7V23l-20 4v25c0 9-13 9-13 2 0-5 4-7 9-7z" fill="#fff"/></svg></button>
            <button class="app" aria-label="Podcasts"><svg viewBox="0 0 72 72"><rect width="72" height="72" rx="16" fill="url(#purpleV)"/><g fill="none" stroke="#fff" stroke-width="3.500"><path d="M24 54a24 24 0 1 1 24 0"/><path d="M26 43a15 15 0 1 1 20 0"/></g><circle cx="36" cy="31" r="6" fill="#fff"/><path d="M30 43q6-5 12 0l-3 18q-3 4-6 0z" fill="#fff"/></svg></button>
            <button class="app" aria-label="News"><svg viewBox="0 0 72 72"><rect width="72" height="72" rx="16" fill="#fff"/><path d="M15 15h13l29 30v12H44L15 27z" fill="#e8485a"/><path d="M38 15h19v20zM15 37v20h19z" fill="#e8485a"/></svg></button>
            <button class="app" aria-label="Keynote"><svg viewBox="0 0 72 72"><rect width="72" height="72" rx="16" fill="#fdfdfd"/><path d="M0 16h72M0 33h72M0 54h72M22 0v72M50 0v72" stroke="#cfe2f3" stroke-width="1"/><path d="M17 8h38l3 19H14z" fill="#3a9bf0"/><path d="M14 27h44v4H14z" fill="#2257b8"/><path d="M22 12h28l1 14H21z" fill="#fff"/><circle cx="36" cy="19" r="7" fill="#5cb85c"/><path d="M36 19v-7a7 7 0 0 1 6 10z" fill="#e05a44"/><path d="M36 19v-7a7 7 0 0 0-7 8z" fill="#3f7fd0"/><path d="M36 31v32M24 64h24" stroke="#8c95a3" stroke-width="3"/></svg></button>
            <button class="app" aria-label="Numbers"><svg viewBox="0 0 72 72"><rect width="72" height="72" rx="16" fill="#fdfdfd"/><path d="M0 10h72M0 20h72M0 30h72M0 40h72M0 50h72M0 60h72M10 0v72M20 0v72M30 0v72M40 0v72M50 0v72M60 0v72" stroke="#cdeecb" stroke-width="1"/><path d="M13 38h10v24H13z" fill="#cf3e45"/><path d="M25 24h10v38H25z" fill="#ee9535"/><path d="M37 9h10v53H37z" fill="#64cc45"/><path d="M49 17h10v45H49z" fill="#3588ec"/></svg></button>
            <button class="app" aria-label="Pages"><svg viewBox="0 0 72 72"><rect width="72" height="72" rx="16" fill="#fdfdfd"/><path d="M34 16h38M34 24h38M0 32h72M0 41h72M0 50h72M0 59h72" stroke="#f6d9b8" stroke-width="1"/><text x="5" y="36" font-size="38" font-weight="700" fill="#eba548" font-family="Inter, sans-serif">“</text><path d="M51 6q4-1 7 2L35 48l-9-3z" fill="#ee9b33"/><path d="M27 45l8 3-7 10-5 6z" fill="#3b3b3b"/><path d="M23 60l-2 6 4-4z" fill="#777"/></svg></button>
            <button class="app" aria-label="App Store"><svg viewBox="0 0 72 72"><rect width="72" height="72" rx="16" fill="url(#blueV)"/><g stroke="#f3f8fe" stroke-width="6" stroke-linecap="round"><path d="M40 16L22 47M32 16l24 39M13 45h30M52 45h7M19 53l-2 3"/></g></svg></button>
            <button class="app" aria-label="System Preferences"><svg viewBox="0 0 72 72"><rect width="72" height="72" rx="16" fill="#b9c0c5"/><circle cx="36" cy="36" r="31" fill="#2c2d2f"/><circle cx="36" cy="36" r="27" fill="none" stroke="#a2a5a8" stroke-width="4" stroke-dasharray="2 1"/><circle cx="36" cy="36" r="21" fill="#55585b" stroke="#c3c6c9" stroke-width="3"/><path d="M36 36h22M36 36L25 17M36 36L25 55" stroke="#c3c6c9" stroke-width="4"/><circle cx="36" cy="36" r="6" fill="#3a3c3e" stroke="#c3c6c9" stroke-width="2"/></svg></button>
            <i class="divider"></i>
            <button class="app running" aria-label="Chrome"><svg viewBox="0 0 72 72"><rect width="72" height="72" rx="16" fill="#f6f6f6"/><circle cx="36" cy="36" r="31" fill="#4a9e55"/><path d="M36 36L9 21a31 31 0 0 1 54 0z" fill="#d94f41"/><path d="M36 21h27a31 31 0 0 1-25 46l11-24z" fill="#f3bf42"/><circle cx="36" cy="36" r="15" fill="#fff"/><circle cx="36" cy="36" r="12" fill="#4379e4"/></svg><span class="count">18</span></button>
            <button class="app running" aria-label="Excel"><svg viewBox="0 0 72 72"><rect width="72" height="72" rx="16" fill="#fff"/><path d="M19 12h41v48H19z" fill="#377a48"/><path d="M19 12h20v12H19z" fill="#4a9e68"/><path d="M39 12h21v12H39z" fill="#63bf86"/><path d="M39 24h21v12H39z" fill="#4a9e68"/><path d="M19 48h41v12H19z" fill="#2a5b36"/><rect x="6" y="22" width="28" height="28" rx="3" fill="#2f7140"/><text x="20" y="43" font-size="19" font-weight="700" fill="#fff" text-anchor="middle" font-family="Inter, sans-serif">X</text></svg></button>
            <button class="app running" aria-label="Word"><svg viewBox="0 0 72 72"><rect width="72" height="72" rx="16" fill="#fff"/><path d="M19 12h41v12H19z" fill="#62a5e8"/><path d="M19 24h41v12H19z" fill="#4480cf"/><path d="M19 36h41v12H19z" fill="#2d5bb8"/><path d="M19 48h41v12H19z" fill="#1e3f8e"/><rect x="6" y="22" width="28" height="28" rx="3" fill="#2755b0"/><text x="20" y="43" font-size="18" font-weight="700" fill="#fff" text-anchor="middle" font-family="Inter, sans-serif">W</text></svg></button>
            <button class="app running" aria-label="PowerPoint"><svg viewBox="0 0 72 72"><rect width="72" height="72" rx="16" fill="#fff"/><circle cx="38" cy="36" r="24" fill="#e0694a"/><path d="M38 36V12a24 24 0 0 1 24 24z" fill="#ef9676"/><path d="M14 36h48a24 24 0 0 1-48 0z" fill="#c8573a"/><rect x="8" y="22" width="28" height="28" rx="3" fill="#bc4226"/><text x="22" y="43" font-size="19" font-weight="700" fill="#fff" text-anchor="middle" font-family="Inter, sans-serif">P</text></svg></button>
            <button class="app running" aria-label="Teams"><svg viewBox="0 0 72 72"><rect width="72" height="72" rx="16" fill="#fff"/><circle cx="37" cy="19" r="8" fill="#7b7fe0"/><circle cx="54" cy="21" r="5" fill="#5259c2"/><path d="M48 30h14v16q-1 7-8 6h-6z" fill="#5259c2"/><path d="M24 30h26v18c0 16-24 16-26 2z" fill="#7b7fe0"/><rect x="8" y="22" width="28" height="28" rx="3" fill="#4547ac"/><text x="22" y="43" font-size="19" font-weight="700" fill="#fff" text-anchor="middle" font-family="Inter, sans-serif">T</text></svg></button>
            <i class="divider"></i>
            <button class="app" aria-label="Documents"><svg class="tall" viewBox="0 0 72 88"><path d="M10 2h32l16 20v54H2V8h8z" fill="#e7e3dc"/><path d="M2 6h46v6H2z" fill="#a48462"/><path d="M54 24h12v46H54z" fill="#b59d7c"/><path d="M5 10h38l21 22v54H5z" fill="#fafafa"/><path d="M43 10l21 22H48z" fill="#dcdcdc" stroke="#c4c4c4" stroke-width="1"/><path d="M15 20h26M15 24h28M15 28h24M15 32h28" stroke="#b5b5b5" stroke-width="2" stroke-dasharray="4 1"/><text x="35" y="79" font-size="12" fill="#555" text-anchor="middle" font-family="Inter, sans-serif">DOCX</text></svg></button>
            <button class="app" aria-label="Trash"><svg class="tall" viewBox="0 0 72 88"><path d="M4 12l12-9 8 3 10-5 8 5 10-3 14 10-6 8H10z" fill="#e9e9e9"/><path d="M14 6l8 10 4-9zM42 4l6 12 7-8z" fill="#4c5a66"/><path d="M30 6l8 3-6 7z" fill="#64c2b4"/><path d="M4 14q32 12 64 0l-6 64q-1 8-26 8t-26-8z" fill="#dcdcdc" opacity=".92"/><path d="M4 14q32 12 64 0" stroke="#b8b8b8" stroke-width="1" fill="none"/><path d="M12 26l6 48M58 26l-5 46M34 30q10 14 2 44" stroke="#efefef" stroke-width="4" fill="none"/></svg></button>
        </nav>
    </main>

    <script src="script.js"></script>
</body>
</html>
```

FILE: styles.css
```css
:root {
    --ui: Inter, "Liberation Sans", sans-serif;
    --cell: Lato, "Liberation Sans", sans-serif;
    --excel: #397b49;
    --purple: #cac0d9;
    --orange: #f6d7b9;
    --blue: #dee6ef;
}

* {
    margin: 0;
    padding: 0;
    box-sizing: border-box;
}

html, body {
    height: 100%;
}

body {
    display: flex;
    flex-direction: column;
    overflow: hidden;
    font-family: var(--ui);
    font-size: 26px;
    color: #222;
    background: #4a4543;
}

a {
    color: inherit;
    text-decoration: none;
}

button, input, select {
    font: inherit;
    color: inherit;
    background: none;
    border: none;
    outline: none;
}

svg {
    display: block;
    flex: none;
}

.defs {
    position: absolute;
    width: 0;
    height: 0;
}

.chev {
    width: 14px;
    height: 10px;
    color: #333;
}

/* menu bar */
.menubar {
    display: flex;
    align-items: center;
    height: 48px;
    flex: none;
    padding: 0 38px 0 43px;
    background: linear-gradient(90deg, #e0e0e0, #eaeaea);
}

.apple-logo {
    width: 27px;
    height: 36px;
    margin-right: 45px;
}

.menus {
    display: flex;
    gap: 41px;
}

.app-name {
    font-weight: 700;
}

.menu-extras {
    display: flex;
    align-items: center;
    gap: 34px;
    margin-left: auto;
}

.clock {
    display: flex;
    gap: 18px;
}

/* desktop and window */
.desktop {
    flex: 1;
    min-height: 0;
    display: flex;
    flex-direction: column;
    align-items: center;
    position: relative;
    padding: 2px 0 11px;
    background: linear-gradient(90deg, #8a8a8a, #3f3b39 1%, #4f4947 40%, #443f3d 70%, #555150);
}

.watermark {
    position: absolute;
    left: 100px;
    bottom: -12px;
    font-size: 56px;
    line-height: 64px;
    font-weight: 300;
    color: #1b1817;
}

.window {
    position: relative;
    align-self: stretch;
    flex: 1;
    min-height: 0;
    display: flex;
    flex-direction: column;
    margin-left: 4px;
    border-radius: 20px;
    overflow: hidden;
    background: #f2f2f2;
}

.titlebar {
    display: grid;
    grid-template-columns: 1fr auto 1fr;
    align-items: center;
    height: 64px;
    flex: none;
    padding: 0 22px 0 25px;
    background: var(--excel);
    border-top: 2px solid #75a680;
    color: #dbe9dd;
}

.title-left, .lights, .quick, .autosave, .doc-title, .title-right {
    display: flex;
    align-items: center;
}

.lights {
    gap: 14px;
}

.light {
    width: 26px;
    height: 26px;
    border-radius: 50%;
    border: 1px solid rgba(0, 0, 0, .3);
}

.red { background: #ed6a5e; }
.yellow { background: #f5bf4f; }
.green { background: #61c554; }

.autosave {
    gap: 12px;
    margin-left: 53px;
    font-size: 22px;
    font-weight: 500;
}

.switch {
    display: flex;
    align-items: center;
    justify-content: space-between;
    width: 78px;
    height: 28px;
    padding: 0 15px 0 1px;
    border-radius: 14px;
    background: #35513d;
    color: #fff;
    font-size: 16px;
}

.switch input {
    appearance: none;
    width: 25px;
    height: 25px;
    border-radius: 50%;
    background: #fff;
}

.quick {
    gap: 25px;
    margin-left: 27px;
}

.undo {
    display: flex;
    align-items: center;
    gap: 14px;
    color: #7ca986;
}

.undo .chev, .doc-title .chev {
    color: #7ca986;
}

.doc-title {
    gap: 8px;
    font-weight: 700;
    color: #9cc0a3;
}

.doc-title b {
    color: #e3eee5;
}

.title-right {
    justify-content: flex-end;
    gap: 36px;
}

/* ribbon */
.ribbon {
    flex: none;
    padding-bottom: 16px;
    background: linear-gradient(#f7f7f7, #eee);
    border-bottom: 2px solid #c4c4c4;
}

.tabs {
    display: flex;
    align-items: flex-end;
    height: 56px;
    padding: 0 20px 0 22px;
}

.tab-list {
    display: flex;
    gap: 48px;
    flex: 1;
    font-weight: 500;
}

.tab-list a {
    height: 50px;
    padding-top: 8px;
    line-height: 30px;
}

.tab-list .active {
    font-weight: 700;
    border-bottom: 6px solid #35704a;
}

.tab-list .tellme {
    display: flex;
    gap: 18px;
    margin-left: -10px;
}

.pill {
    display: flex;
    align-items: center;
    gap: 9px;
    height: 48px;
    padding: 0 11px 0 14px;
    margin-left: 21px;
    border: 2px solid #d6d6d6;
    border-radius: 8px;
    background: #fff;
    color: var(--excel);
    font-size: 24px;
    font-weight: 600;
}

.groups {
    display: grid;
    grid-template-columns: 210px 540px 324px 278px 352px 364px 194px 310px 130px 1fr;
    height: 124px;
    margin-top: 12px;
    font-size: 21px;
    color: #000;
}

.group {
    border-right: 2px solid #d2d2d2;
}

.group:last-child {
    border-right: none;
}

.row {
    display: flex;
    align-items: center;
    height: 48px;
    margin-top: 10px;
}

.row + .row {
    margin-top: 16px;
}

.stack {
    display: grid;
    grid-template-rows: repeat(3, 44px);
    justify-items: start;
}

.tool {
    display: flex;
    align-items: center;
    gap: 12px;
}

.big {
    display: flex;
    flex-direction: column;
    align-items: center;
    gap: 9px;
    padding-top: 6px;
    line-height: 24px;
    white-space: nowrap;
    align-self: start;
}

.big-icon {
    display: flex;
    align-items: center;
    gap: 11px;
    height: 64px;
}

.clipboard, .style-group, .edit-group, .analyze-group, .sens-group {
    display: flex;
}

.clipboard {
    gap: 14px;
    padding-left: 34px;
}

.clipboard .big-icon {
    gap: 8px;
}

.font-group, .align-group {
    padding-left: 20px;
}

.select {
    position: relative;
    display: block;
    height: 48px;
    font-size: 23px;
}

.select select {
    appearance: none;
    width: 100%;
    height: 100%;
    padding: 0 10px;
    line-height: 30px;
    border: 2px solid #c2c2c2;
    border-radius: 8px;
    background: #fff;
}

.select .chev {
    position: absolute;
    right: 8px;
    top: 20px;
}

.wide { width: 282px; }
.narrow { width: 108px; margin-left: 4px; }
.format { width: 310px; }

.grow {
    margin-left: 14px;
}

.grow + .grow {
    margin-left: 22px;
}

.sq {
    display: flex;
    align-items: center;
    justify-content: center;
    width: 48px;
    height: 48px;
    margin-right: 4px;
    border-radius: 6px;
    font-size: 25px;
    color: #333;
}

.on {
    background: #c3c3c3;
}

.bold { font-weight: 700; }

.italic {
    font-family: "Liberation Serif", serif;
    font-style: italic;
    font-size: 28px;
}

.under {
    text-decoration: underline;
    text-underline-offset: 5px;
}

.sep {
    width: 2px;
    height: 36px;
    margin: 0 25px 0 21px;
    background: #d2d2d2;
}

.font-group .tool {
    gap: 14px;
}

.font-group .tool + .tool {
    margin-left: 17px;
}

.align-group .sep {
    margin-left: 12px;
}

.indent {
    margin-left: 22px;
}

.wrap-group {
    padding-left: 24px;
}

.number-group {
    padding-left: 19px;
}

.numbers {
    padding-left: 13px;
    gap: 20px;
}

.numbers .sep {
    margin: 0 4px 0 10px;
}

.glyph {
    font-size: 32px;
    font-weight: 300;
    color: #222;
}

.style-group {
    gap: 15px;
    padding-left: 24px;
}

.style-group .big {
    min-width: 84px;
}

.cells-group {
    padding-left: 26px;
}

.edit-group {
    gap: 16px;
    padding-left: 26px;
}

.analyze-group {
    justify-content: center;
}

.sens-group {
    padding-left: 25px;
}

/* formula bar */
.formula-bar {
    display: flex;
    align-items: center;
    height: 58px;
    flex: none;
    padding-right: 7px;
    background: #fff;
    border-bottom: 6px double #a5a5a5;
    font-family: var(--cell);
    font-size: 25px;
    color: #333;
}

.name-box {
    display: flex;
    align-items: center;
    width: 170px;
    height: 52px;
    margin-right: 29px;
    padding: 0 8px 0 19px;
    border-right: 2px solid #c0c0c0;
    border-top: 2px solid #b5b5b5;
}

.name-box input {
    flex: 1;
    min-width: 0;
}

.enter {
    margin: 0 34px 0 32px;
}

.fx {
    font-family: "Liberation Serif", serif;
    font-style: italic;
    font-size: 32px;
}

.formula {
    flex: 1;
    height: 30px;
    margin-left: 17px;
    padding-left: 15px;
    border-left: 2px solid #ddd;
}

/* grid */
.sheet {
    flex: 1;
    min-height: 0;
    overflow: hidden;
    background: #fff;
}

table {
    table-layout: fixed;
    width: 0;
    border-collapse: separate;
    border-spacing: 0;
    font-family: var(--cell);
    font-size: 21px;
    line-height: 26px;
    color: #000;
}

.w-head { width: 46px; }
.w-a { width: 232px; }
.w-b { width: 157px; }
.w-c { width: 105px; }
.w-d { width: 218px; }
.w-e { width: 222px; }
.w-f { width: 178px; }
.w-std { width: 106px; }
.w-n { width: 138px; }
.w-u { width: 110px; }

th {
    font-weight: 400;
    color: #666;
}

thead th {
    position: sticky;
    top: 0;
    height: 43px;
    font-size: 20px;
    background: linear-gradient(#fdfdfd, #f6f6f6);
    border-right: 2px solid #e6e6e6;
    border-bottom: 2px solid #b9b9b9;
}

thead .selected {
    background: #f2f2f2;
    border-bottom: 4px solid #35704a;
    color: #35704a;
}

.corner svg {
    margin-left: 10px;
}

tbody th {
    height: 30px;
    padding: 2px 4px 0 0;
    text-align: right;
    background: #f9f9f9;
    border-right: 2px solid #bdbdbd;
    border-bottom: 2px solid #e9e9e9;
}

td {
    height: 30px;
    padding: 2px 6px 0 0;
    text-align: right;
    white-space: nowrap;
    border-right: 2px solid #000;
    border-bottom: 2px solid #000;
}

td.label {
    font-size: 20px;
    text-align: left;
}

td.center { text-align: center; padding-right: 0; }
td.purple { background: var(--purple); }
td.orange { background: var(--orange); }
td.blue { background: var(--blue); }
td.divide { background: #ffff54; }

/* sheet tabs */
.sheet-tabs {
    display: flex;
    height: 54px;
    flex: none;
    border-top: 2px solid #cfcfcf;
    border-bottom: 2px solid #9b9b9b;
    background: linear-gradient(#f2f2f2, #eaeaea);
    color: #5c5c5c;
    font-size: 24px;
}

.scrollers {
    display: flex;
    align-items: center;
    gap: 32px;
    width: 122px;
    height: 42px;
    padding: 8px 0 0 29px;
    border-right: 2px solid #c6c6c6;
}

.sheet-tabs a {
    display: flex;
    align-items: center;
    justify-content: center;
    height: 42px;
    padding-top: 6px;
}

.sheet-tabs .short {
    width: 158px;
    border-right: 2px solid #c6c6c6;
}

.sheet-tabs .long { width: 293px; }

.sheet-tabs .current {
    height: 44px;
    margin-top: -2px;
    border: none;
    border-radius: 0 0 6px 6px;
    background: #fff;
    box-shadow: 0 2px 2px #aaa;
    color: var(--excel);
    font-weight: 700;
}

.add {
    display: flex;
    align-items: center;
    justify-content: center;
    width: 78px;
    height: 42px;
    padding-top: 4px;
    border-right: 2px solid #c6c6c6;
}

/* status bar */
.statusbar {
    display: flex;
    align-items: center;
    height: 44px;
    flex: none;
    padding: 0 48px;
    background: linear-gradient(#dedede, #c2c2c2);
    color: #4c4c4c;
    font-size: 24px;
}

.ready {
    flex: 1;
}

.view {
    display: flex;
    align-items: center;
    justify-content: center;
    width: 71px;
    height: 44px;
}

.view.on {
    width: 74px;
    background: #979797;
}

.zoom-btn {
    margin: 0 14px 0 17px;
}

.statusbar input {
    appearance: none;
    width: 200px;
    height: 8px;
    border-radius: 4px;
    background: #929292;
}

.statusbar input::-webkit-slider-thumb {
    appearance: none;
    width: 32px;
    height: 32px;
    border-radius: 50%;
    background: #f7f7f7;
    box-shadow: 0 1px 2px #777;
}

.percent {
    margin-left: 17px;
}

/* dock */
.dock {
    position: relative;
    display: flex;
    gap: 22px;
    height: 111px;
    flex: none;
    margin-top: 4px;
    padding: 15px 15px 0;
    border: 2px solid #a8a29d;
    border-radius: 34px;
    background: linear-gradient(90deg, #7d756f, #857d79 30%, #a39a94 65%, #8f8883 80%, #958b87);
}

.app {
    position: relative;
    width: 72px;
    height: 72px;
}

.app > svg {
    width: 72px;
    height: 72px;
    overflow: visible;
}

.app > .tall {
    height: 88px;
    margin-top: -8px;
}

.running::after {
    content: "";
    position: absolute;
    left: 32px;
    bottom: -19px;
    width: 8px;
    height: 8px;
    border-radius: 50%;
    background: #0d0a09;
}

.badge {
    position: absolute;
    top: -9px;
    right: -10px;
    min-width: 34px;
    height: 34px;
    padding: 0 5px;
    border-radius: 17px;
    background: #e25141;
    color: #fff;
    font-size: 17px;
    line-height: 34px;
    text-align: center;
}

.count {
    position: absolute;
    right: -8px;
    bottom: -8px;
    width: 36px;
    height: 36px;
    border: 4px solid #5c94e8;
    border-radius: 50%;
    background: #eef3fb;
    color: #333;
    font-size: 17px;
    line-height: 28px;
    text-align: center;
}

.divider {
    width: 2px;
    height: 84px;
    margin: -2px 9px 0;
    background: #605955;
}
```

FILE: script.js
```js
// month, then columns C to V
const data = `
108|Aug-16|4,921.70|432.9|3,541.70|947.1|1,164.70|117.2|810.1|237.5|3,756.40|315.7|2,731.40|709.4|27.63|15.71|28.7|29.36|26.7|17.1|27.6|27.3
109|Sep-16|4,850.10|436.7|3,502.40|911|1,140.90|104.9|802.2|233.8|3,709.10|331.8|2,700.20|677.2|27.91|16.29|28.95|29.52|26.91|17.62|27.86|27.8
110|Oct-16|4,829.40|406.9|3,515.50|906.9|1,133.80|111.1|800.6|222.2|3,695.50|295.8|2,715.00|684.7|28.09|16.98|29|29.57|26.75|17.92|27.59|28.12
111|Nov-16|4,809.40|399.8|3,541.40|868.2|1,112.60|97.5|798.2|216.9|3,696.80|302.3|2,743.20|651.3|28.24|17.1|29.13|29.72|27|17.94|27.59|28.93
112|Dec-16|4,824.20|398.2|3,547.00|879|1,126.50|104.2|785.3|237|3,697.70|294.1|2,761.70|642|28.22|17.18|29.16|29.39|26.95|18.05|27.54|28.91
113|Jan-17|4,738.60|360.2|3,502.50|875.8|1,079.20|88|760.7|230.4|3,659.40|272.2|2,741.80|645.4|28.26|16.81|29.37|28.54|26.92|17.89|27.73|27.68
114|Feb-17|4,769.10|358.7|3,522.90|887.6|1,082.50|92.9|747.8|241.7|3,686.60|265.8|2,775.00|645.8|28.39|16.91|29.54|28.46|26.88|18.82|27.55|27.88
115|Mar-17|4,772.90|375.9|3,515.00|882|1,097.00|97.6|754.4|245|3,675.80|278.3|2,760.50|637|28.38|16.5|29.59|28.66|26.95|18.1|27.79|27.89
116|Apr-17|4,801.50|379.7|3,511.60|910.2|1,100.90|96.3|758.1|246.5|3,700.60|283.4|2,753.50|663.7|28.32|16.31|29.4|29.18|26.93|17.14|27.74|28.25
117|May-17|5,001.50|512.2|3,551.10|938.1|1,175.90|134.1|793|248.7|3,825.60|378.1|2,758.10|689.4|27.88|16.3|29.29|28.87|26.4|17.33|27.44|27.98
118|Jun-17|5,047.00|548.2|3,563.30|935.6|1,179.70|126.3|816.9|236.5|3,867.30|421.9|2,746.30|699.1|27.94|15.99|29.42|29.3|26.82|17.23|27.76|28.68
119|Jul-17|5,113.20|649.1|3,536.80|927.3|1,200.90|159.4|822.2|219.3|3,912.40|489.7|2,714.60|708.1|27.59|15.52|29.36|29.32|26.41|16.96|27.71|28.42
120|Aug-17|5,114.10|631.1|3,551.20|931.8|1,188.60|152.2|820.4|216|3,925.50|478.9|2,730.80|715.8|27.77|16.01|29.32|29.79|26.54|17.5|27.69|28.54
121|Sep-17|4,968.50|433.3|3,599.70|935.5|1,174.70|121.3|835.9|217.5|3,793.80|312|2,763.80|718|28.43|17.39|29.46|29.56|27.15|18.58|27.94|28.91
122|Oct-17|4,967.40|447.4|3,565.10|955|1,178.30|127.7|829.6|221|3,789.10|319.7|2,735.40|734|28.49|17.84|29.59|29.4|27.03|19.25|28.04|27.75
123|Nov-17|4,967.20|444.9|3,567.80|954.5|1,184.00|127.6|833.1|223.4|3,783.20|317.3|2,734.70|731.2|28.84|17.62|29.87|30.26|27.32|19.13|28.31|28.33
124|Dec-17|4,966.80|407.5|3,606.90|952.3|1,174.30|119.8|832.7|221.8|3,792.50|287.8|2,774.20|730.6|29.07|17.95|29.76|31.21|27.22|19.25|27.77|29.45
125
126|Jan-08|1,053.00|486.4|419.8|146.8|49.2|19.8|20.3|9.1|1,003.80|466.6|399.5|137.7|14.52|9.85|18.76|17.85|16.09|11.98|17.76|21.33
127|Feb-08|1,053.70|501.5|406.1|146.2|50.8|19.3|21.4|10.2|1,002.90|482.2|384.7|136|14.59|9.82|18.96|18.85|16.22|11.76|17.59|21.81
128|Mar-08|1,049.30|496.6|396.3|156.4|52.7|22.8|18.1|11.9|996.6|473.9|378.2|144.5|14.33|9.83|18.13|18.97|16.51|12.34|19.64|19.74
129|Apr-08|1,018.70|485.8|380|152.9|44.6|18.3|16.7|9.6|974.1|467.5|363.3|143.3|14.48|10.03|18.47|18.73|16.25|11.22|19.41|20.32
130|May-08|1,024.10|457.6|402.3|164.3|62|21.7|27.2|13.1|962.1|435.9|375.1|151.2|14.62|9.77|18.56|18.49|15.09|11.23|16.22|19.16
131|Jun-08|998.6|437.5|400.4|160.7|56.6|19.1|24.1|13.5|942|418.5|376.3|147.2|14.46|9.81|18.45|17.2|14.75|10.25|16|18.88
132|Jul-08|939.6|404.1|378.3|157.1|51|18.6|19.5|13|888.5|385.5|358.9|144.1|14.42|9.79|18.16|17.3|14.22|10.63|17.87|13.89
133|Aug-08|879|390.2|345.6|143.1|56.9|25|21.6|10.3|822.1|365.2|324.1|132.9|14.28|9.77|18.1|17.38|13.93|11.32|16.32|15.28
134|Sep-08|1,020.00|468.8|394.7|156.5|61.5|27.4|22.9|11.1|958.6|441.4|371.8|145.4|14.46|10.07|18.59|17.23|14.67|11.7|16.84|17.52
135|Oct-08|1,064.30|459.9|430.8|173.6|58.8|25.9|23.8|9.1|1,005.50|434|407|164.5|14.56|10.12|18.13|17.46|15.63|11.57|18.61|19.44
136|Nov-08|1,065.10|480.9|430.2|154|49.7|17.6|24.2|8|1,015.30|463.3|406|146|14.86|10.3|18.64|18.49|16.43|12.1|18.5|19.7
137|Dec-08|1,080.50|495.5|427.9|157.1|51.1|23.2|21.5|6.4|1,029.40|472.3|406.4|150.7|14.63|10.15|18.57|18.05|15.19|12.06|18.17|16.59
138|Jan-09|1,052.20|468.5|424.8|158.9|52.9|24.6|20|8.3|999.3|444|404.7|150.6|15.02|10.29|19|18.37|17.81|14.75|20.65|19.98
139|Feb-09|1,059.70|479.7|421.6|158.3|60.2|25.5|25.9|8.7|999.5|454.1|395.7|149.6|14.65|10.28|18.22|18.39|16.09|12.52|17.1|23.52
140|Mar-09|1,085.80|463.2|462.9|159.7|72.1|23.8|34.2|14|1,013.80|439.4|428.7|145.7|15.29|10.59|18.86|18.6|18.29|14.23|18.75|24.06
141|Apr-09|1,057.30|450.2|440.5|166.7|60.6|23.4|27.2|10|996.8|426.8|413.2|156.7|15.49|10.62|19.08|19.15|18.01|14.85|18.08|25.2
142|May-09|1,034.30|445.9|416.9|171.5|53.1|19.3|25.4|8.5|981.2|426.6|391.5|163.1|15.27|10.48|18.41|20.07|16.38|12.29|16.44|25.49
143|Jun-09|1,053.40|437.5|438.5|177.5|57.7|19.4|27.1|11.2|995.7|418.1|411.4|166.3|15.49|10.77|18.68|19.24|17.98|12.29|17.99|27.78
144|Jul-09|934.3|386.8|394.5|153|57.5|20.6|24.7|12.2|876.8|366.2|369.8|140.8|15.28|10.58|18.28|19.41|16.62|12.11|17.22|23.03
145|Aug-09|949.9|413.5|382|154.4|56|21.7|22.6|11.7|893.9|391.8|359.4|142.7|14.81|10.51|17.92|18.62|16.73|12.23|18.4|21.86
146|Sep-09|1,001.30|441.2|400|160.1|57.8|19.9|26|12|943.4|421.3|374.1|148.1|15.33|10.92|18.82|18.78|16.42|12.23|17.89|20.2
147|||||||||||||||||||||
`.trim().split('\n');

const letters = 'ABCDEFGHIJKLMNOPQRSTUV'.split('');
const labels = { 126: 'Part-time employees 9' };
const widths = { A: 'w-a', B: 'w-b', C: 'w-c', D: 'w-d', E: 'w-e', F: 'w-f', N: 'w-n', U: 'w-u' };

function fill(letter) {
    if ('AB'.includes(letter)) return '';
    if ('CDEFOPQR'.includes(letter)) return 'purple';
    if ('KLMN'.includes(letter)) return 'blue';
    return 'orange';
}

document.getElementById('cols').innerHTML = '<col class="w-head">' +
    letters.map(l => `<col class="${widths[l] || 'w-std'}">`).join('');

document.getElementById('letters').innerHTML =
    '<th class="corner"><svg width="30" height="30" viewBox="0 0 30 30"><path d="M30 0v30H0z" fill="#dedede"/></svg></th>' +
    letters.map(l => `<th${l === 'E' ? ' class="selected"' : ''}>${l}</th>`).join('');

document.getElementById('rows').innerHTML = data.map(line => {
    const [num, ...cells] = line.split('|');
    if (!cells.length) {
        return `<tr><th>${num}</th><td class="divide" colspan="22"></td></tr>`;
    }
    const tds = letters.map((l, i) => {
        if (l === 'A') return `<td class="label">${labels[num] || ''}</td>`;
        return `<td class="${fill(l)}${l === 'E' ? ' center' : ''}">${cells[i - 1]}</td>`;
    });
    return `<tr><th>${num}</th>${tds.join('')}</tr>`;
}).join('');

// row 108 is scrolled mostly under the header
document.getElementById('sheet').scrollTop = 21;
```
